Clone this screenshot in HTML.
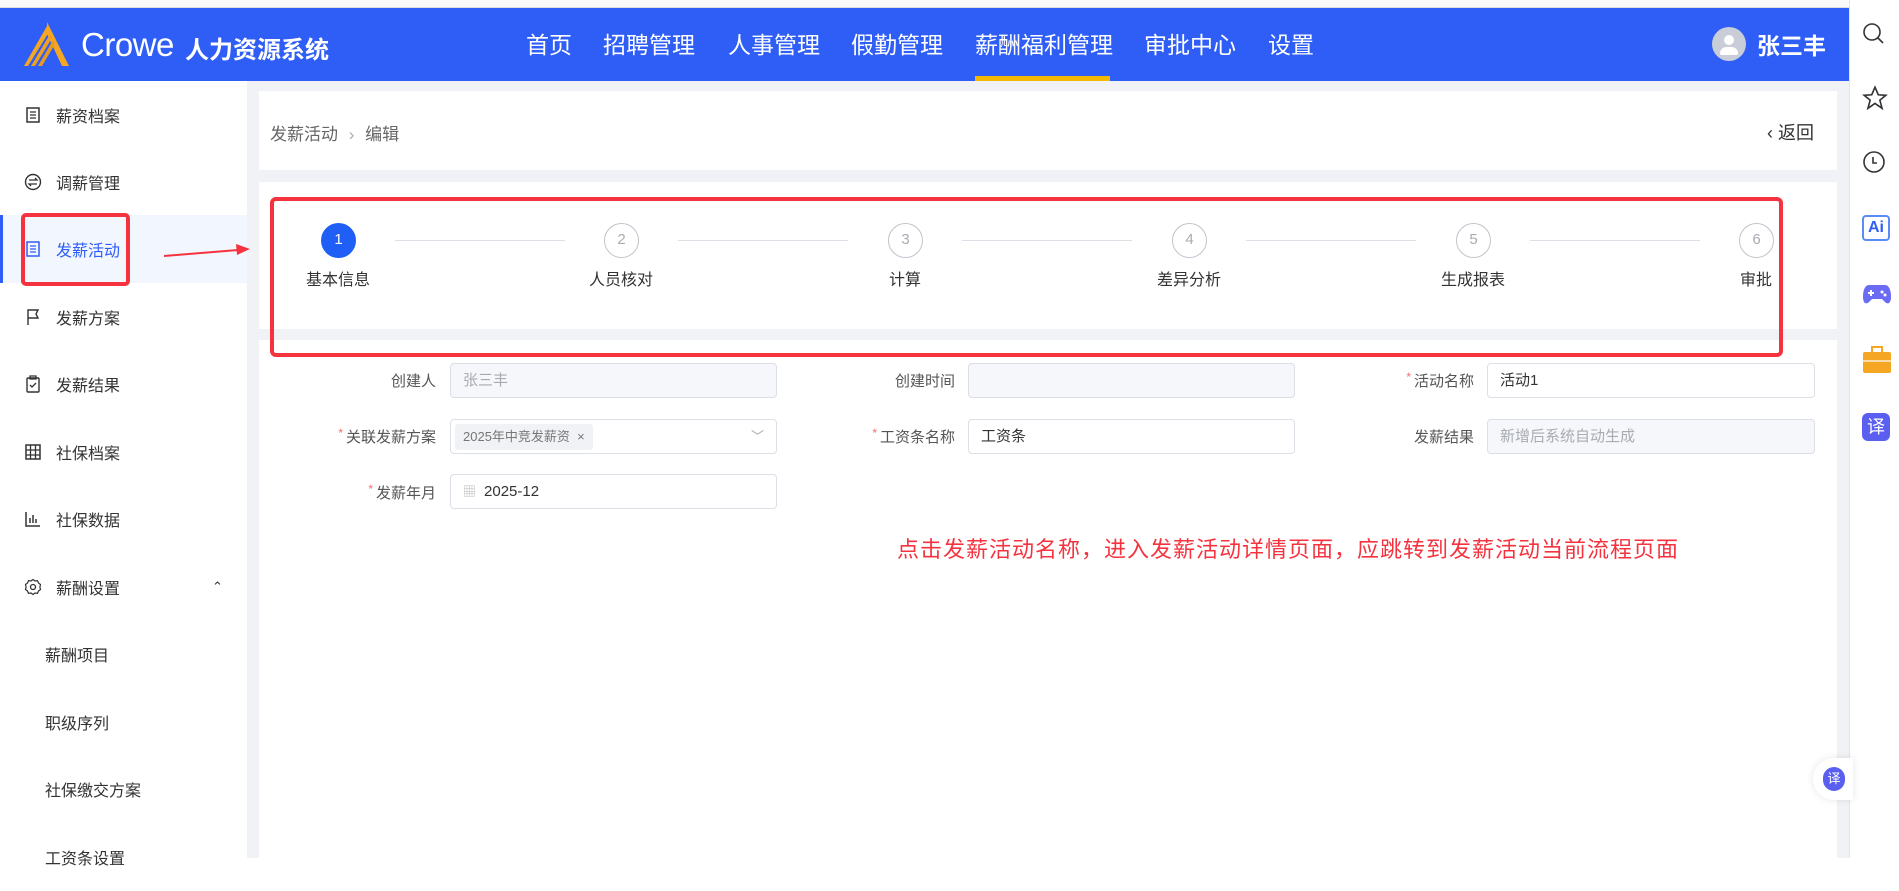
<!DOCTYPE html>
<html style="background:#fff"><head><meta charset="utf-8"><style>
*{box-sizing:border-box;margin:0;padding:0}
body{width:1899px;height:858px;overflow:hidden;background:#f0f2f5;font-family:"Liberation Sans","Noto Sans CJK SC",sans-serif;position:relative;color:#333}
.abs{position:absolute}
.hdr{left:0;top:8px;width:1849px;height:73px;background:#2f5ef6;color:#fff}
.topw{left:0;top:0;width:1849px;height:8px;background:#fafafa;border-bottom:1px solid #ddd}
.nav{top:18px;font-size:23px;white-space:nowrap}
.side{left:0;top:81px;width:247px;height:777px;background:#fff}
.item{position:absolute;left:0;width:247px;height:68px;font-size:16px;color:#333;display:flex;align-items:center}
.item .ic{position:absolute;left:24px;width:18px;height:18px}
.item span{position:absolute;left:56px}
.sub span{left:45px}
.card{background:#fff;position:absolute}
.circ{position:absolute;width:35px;height:35px;border-radius:50%;border:1.5px solid #c0c4cc;color:#a8abb2;font-size:15px;text-align:center;line-height:32px;top:223px}
.lbl{position:absolute;top:266px;font-size:16px;color:#333;width:120px;text-align:center}
.line{position:absolute;top:240px;height:1px;background:#dcdfe6}
.fl{position:absolute;font-size:15px;color:#555;text-align:right;width:140px}
.fl b{color:#f56c6c;font-weight:normal;font-size:12px;margin-right:3px;vertical-align:top}
.inp{position:absolute;height:35px;border:1px solid #dcdfe6;border-radius:4px;background:#fff;font-size:15px;color:#333;padding-left:12px;line-height:33px}
.dis{background:#f5f7fa;color:#a8abb2}
.ri{position:absolute;left:1862px}
</style></head><body>
<div class="abs topw"></div>
<div class="abs hdr">
  <svg class="abs" style="left:22px;top:14px" width="50" height="44" viewBox="0 0 50 44">
    <path d="M25 0 L47 44 L40 44 L25 12 Z" fill="#f5a623"/>
    <path d="M25 4 L2 44 L6 44 L27 10 Z" fill="#f5a623"/>
    <path d="M28 12 L9 44 L13 44 L30 16 Z" fill="#f0a020"/>
    <path d="M31 18 L16 44 L20 44 L33 22 Z" fill="#e89a1e"/>
  </svg>
  <div class="abs" style="left:81px;top:18px;font-size:33px;letter-spacing:-0.5px">Crowe</div>
  <div class="abs" style="left:185px;top:22px;font-size:24px;font-weight:bold">人力资源系统</div>
  <div class="abs nav" style="left:526px">首页</div>
  <div class="abs nav" style="left:603px">招聘管理</div>
  <div class="abs nav" style="left:728px">人事管理</div>
  <div class="abs nav" style="left:851px">假勤管理</div>
  <div class="abs nav" style="left:975px">薪酬福利管理</div>
  <div class="abs" style="left:975px;top:68px;width:135px;height:5px;background:#f5b800"></div>
  <div class="abs nav" style="left:1144px">审批中心</div>
  <div class="abs nav" style="left:1268px">设置</div>
  <div class="abs" style="left:1712px;top:19px;width:34px;height:34px;border-radius:50%;background:#c8cdd8">
    <div class="abs" style="left:12px;top:8px;width:10px;height:10px;border-radius:50%;background:#fff"></div>
    <div class="abs" style="left:8px;top:20px;width:18px;height:8px;border-radius:8px 8px 2px 2px;background:#fff"></div>
  </div>
  <div class="abs" style="left:1757px;top:19px;font-size:23px;font-weight:bold">张三丰</div>
</div>

<div class="abs side">
  <div class="item" style="top:0px"><svg class="ic" viewBox="0 0 18 18"><rect x="3" y="2" width="12" height="14" fill="none" stroke="#333" stroke-width="1.5"/><path d="M6 6h6M6 9h6M6 12h6" stroke="#333" stroke-width="1.3"/></svg><span>薪资档案</span></div>
  <div class="item" style="top:67px"><svg class="ic" viewBox="0 0 18 18"><circle cx="9" cy="9" r="7.5" fill="none" stroke="#333" stroke-width="1.4"/><path d="M5 7h8l-2-2M13 11H5l2 2" fill="none" stroke="#333" stroke-width="1.3"/></svg><span>调薪管理</span></div>
  <div class="item" style="top:134px;background:#f2f6ff;border-left:3px solid #2f5ef6;color:#2f5ef6"><svg class="ic" style="left:21px" viewBox="0 0 18 18"><rect x="3" y="2" width="12" height="14" fill="none" stroke="#2f5ef6" stroke-width="1.5"/><path d="M6 6h6M6 9h6M6 12h6" stroke="#2f5ef6" stroke-width="1.3"/></svg><span style="left:53px">发薪活动</span></div>
  <div class="item" style="top:202px"><svg class="ic" viewBox="0 0 18 18"><path d="M4 17V2h10l-2 4 2 4H4" fill="none" stroke="#333" stroke-width="1.4"/></svg><span>发薪方案</span></div>
  <div class="item" style="top:269px"><svg class="ic" viewBox="0 0 18 18"><rect x="3" y="3" width="12" height="14" rx="1" fill="none" stroke="#333" stroke-width="1.4"/><path d="M6 1h6v3H6zM6 10l2 2 4-4" fill="none" stroke="#333" stroke-width="1.3"/></svg><span>发薪结果</span></div>
  <div class="item" style="top:337px"><svg class="ic" viewBox="0 0 18 18"><rect x="2" y="2" width="14" height="14" fill="none" stroke="#333" stroke-width="1.5"/><path d="M6.5 2v14M11.5 2v14M2 7h14M2 12h14" stroke="#333" stroke-width="1.3"/></svg><span>社保档案</span></div>
  <div class="item" style="top:404px"><svg class="ic" viewBox="0 0 18 18"><path d="M2 2v14h14M6 13V8M9 13V5M12 13V9" fill="none" stroke="#333" stroke-width="1.5"/></svg><span>社保数据</span></div>
  <div class="item" style="top:472px"><svg class="ic" viewBox="0 0 18 18"><circle cx="9" cy="9" r="2.5" fill="none" stroke="#333" stroke-width="1.3"/><path d="M9 1.5l2 1.5 2.5-.3 1 2.3 2 1.5-.6 2.5.6 2.5-2 1.5-1 2.3-2.5-.3-2 1.5-2-1.5-2.5.3-1-2.3-2-1.5.6-2.5-.6-2.5 2-1.5 1-2.3 2.5.3z" fill="none" stroke="#333" stroke-width="1.2"/></svg><span>薪酬设置</span><span style="left:212px;font-size:13px">⌃</span></div>
  <div class="item sub" style="top:539px"><span>薪酬项目</span></div>
  <div class="item sub" style="top:607px"><span>职级序列</span></div>
  <div class="item sub" style="top:674px"><span>社保缴交方案</span></div>
  <div class="item sub" style="top:742px"><span>工资条设置</span></div>
</div>
<div class="abs" style="left:21px;top:213px;width:109px;height:73px;border:4px solid #f5333f;border-radius:5px"></div>
<svg class="abs" style="left:160px;top:240px" width="92" height="20" viewBox="0 0 92 20"><path d="M4 16 L78 10" stroke="#f5333f" stroke-width="2"/><path d="M76 4 L90 9 L77 15 Z" fill="#f5333f"/></svg>

<div class="card" style="left:259px;top:91px;width:1578px;height:79px">
  <div class="abs" style="left:11px;top:29px;font-size:17px;color:#666">发薪活动 <span style="color:#aaa;margin:0 6px">›</span> 编辑</div>
  <div class="abs" style="left:1508px;top:28px;font-size:18px;color:#333">‹ 返回</div>
</div>
<div class="card" style="left:259px;top:182px;width:1578px;height:147px"></div>
<div class="card" style="left:259px;top:340px;width:1578px;height:518px"></div>

<div class="circ" style="left:321px;background:#1f5ff5;border-color:#1f5ff5;color:#fff">1</div>
<div class="lbl" style="left:278px">基本信息</div>
<div class="line" style="left:395px;width:170px"></div>
<div class="circ" style="left:604px">2</div>
<div class="lbl" style="left:561px">人员核对</div>
<div class="line" style="left:678px;width:170px"></div>
<div class="circ" style="left:888px">3</div>
<div class="lbl" style="left:845px">计算</div>
<div class="line" style="left:962px;width:170px"></div>
<div class="circ" style="left:1172px">4</div>
<div class="lbl" style="left:1129px">差异分析</div>
<div class="line" style="left:1246px;width:170px"></div>
<div class="circ" style="left:1456px">5</div>
<div class="lbl" style="left:1413px">生成报表</div>
<div class="line" style="left:1530px;width:170px"></div>
<div class="circ" style="left:1739px">6</div>
<div class="lbl" style="left:1696px">审批</div>
<div class="abs" style="left:270px;top:197px;width:1513px;height:160px;border:4px solid #f5333f;border-radius:6px"></div>

<div class="fl" style="left:296px;top:370px">创建人</div>
<div class="inp dis" style="left:450px;top:363px;width:327px">张三丰</div>
<div class="fl" style="left:815px;top:370px">创建时间</div>
<div class="inp dis" style="left:968px;top:363px;width:327px"></div>
<div class="fl" style="left:1334px;top:370px"><b>*</b>活动名称</div>
<div class="inp" style="left:1487px;top:363px;width:328px">活动1</div>

<div class="fl" style="left:296px;top:426px"><b>*</b>关联发薪方案</div>
<div class="inp" style="left:450px;top:419px;width:327px;padding-left:4px">
  <span style="display:inline-block;background:#f0f2f5;color:#777;font-size:13px;line-height:26px;height:26px;padding:0 8px;border-radius:3px;vertical-align:middle">2025年中竞发薪资 &nbsp;×</span>
  <span class="abs" style="right:12px;top:0;color:#aaa;font-size:13px">﹀</span>
</div>
<div class="fl" style="left:815px;top:426px"><b>*</b>工资条名称</div>
<div class="inp" style="left:968px;top:419px;width:327px">工资条</div>
<div class="fl" style="left:1334px;top:426px">发薪结果</div>
<div class="inp dis" style="left:1487px;top:419px;width:328px">新增后系统自动生成</div>

<div class="fl" style="left:296px;top:482px"><b>*</b>发薪年月</div>
<div class="inp" style="left:450px;top:474px;width:327px;padding-left:12px"><span style="color:#bbb;font-size:13px;margin-right:8px">▦</span>2025-12</div>

<div class="abs" style="left:897px;top:532px;font-size:22px;color:#f5333f;white-space:nowrap;letter-spacing:1px">点击发薪活动名称，进入发薪活动详情页面，应跳转到发薪活动当前流程页面</div>

<div class="abs" style="left:1849px;top:0;width:50px;height:858px;background:#fff;border-left:1px solid #e4e4e4"></div>
<svg class="ri" style="top:22px" width="24" height="24" viewBox="0 0 24 24"><circle cx="10" cy="10" r="8" fill="none" stroke="#333" stroke-width="1.6"/><path d="M16 16l5 5" stroke="#333" stroke-width="1.6"/></svg>
<svg class="ri" style="top:85px" width="26" height="26" viewBox="0 0 24 24"><path d="M12 2l3 7 7 .5-5.5 4.5 2 7.5L12 17l-6.5 4.5 2-7.5L2 9.5 9 9z" fill="none" stroke="#333" stroke-width="1.5"/></svg>
<svg class="ri" style="top:150px" width="24" height="24" viewBox="0 0 24 24"><circle cx="12" cy="12" r="10" fill="none" stroke="#333" stroke-width="1.6"/><path d="M11 7v6h4" fill="none" stroke="#333" stroke-width="1.6"/></svg>
<div class="ri" style="top:215px;width:28px;height:26px;border:2px solid #5b8cf5;border-radius:4px;color:#2f5ef6;font-weight:bold;font-size:16px;line-height:22px;text-align:center;font-family:'Liberation Sans',sans-serif">Ai</div>
<svg class="ri" style="top:282px" width="30" height="24" viewBox="0 0 30 24"><path d="M7 3h16c4 0 6 5 6 12 0 6-3 8-6 5l-3-3H10l-3 3c-3 3-6 1-6-5C1 8 3 3 7 3z" fill="#6a6cf5"/><path d="M6 11h6M9 8v6" stroke="#fff" stroke-width="2"/><circle cx="20" cy="10" r="1.5" fill="#fff"/><circle cx="23" cy="13" r="1.5" fill="#fff"/></svg>
<svg class="ri" style="top:346px" width="30" height="28" viewBox="0 0 30 28"><rect x="10" y="1" width="10" height="6" fill="none" stroke="#f5a623" stroke-width="2"/><rect x="1" y="6" width="28" height="21" rx="2" fill="#f5a623"/><rect x="1" y="14" width="28" height="2" fill="#fff" opacity=".6"/></svg>
<div class="ri" style="top:413px;width:28px;height:28px;border-radius:6px;background:#5a5ff0;color:#fff;font-size:18px;text-align:center;line-height:28px">译</div>
<div class="abs" style="left:1813px;top:758px;width:40px;height:42px;background:#fff;border-radius:21px 0 0 21px;box-shadow:0 0 8px rgba(0,0,0,.1)"></div>
<div class="abs" style="left:1823px;top:767px;width:22px;height:24px;border-radius:11px;background:#5a5ff0;color:#fff;font-size:13px;text-align:center;line-height:24px">译</div>
</body></html>
